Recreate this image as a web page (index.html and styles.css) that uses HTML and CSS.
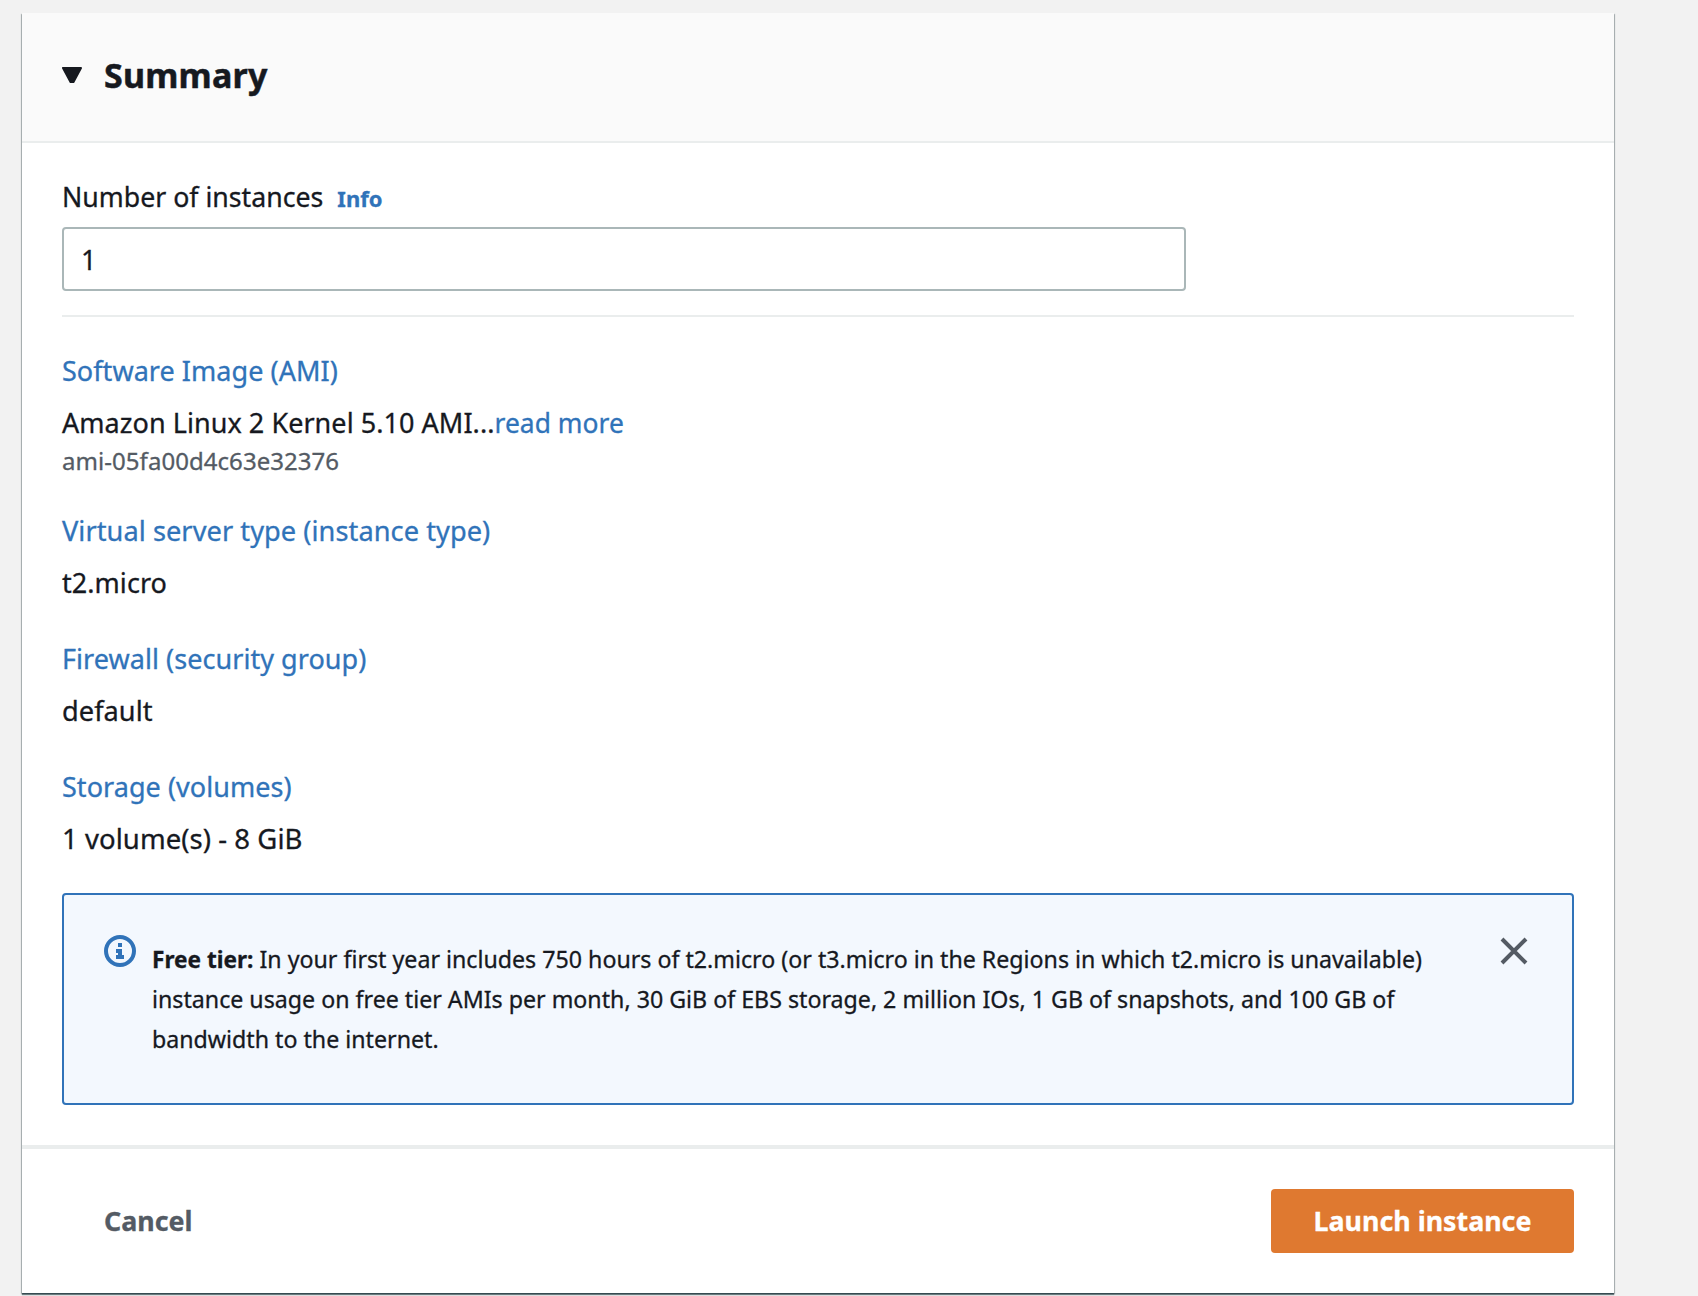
FILE: index.html
```html
<!doctype html>
<html lang="en">

<head>
    <meta charset="utf-8">
    <title>Launch an instance</title>
    <link rel="stylesheet" href="styles.css">
</head>

<body>
    <div class="panel">
        <div class="header">
            <svg class="caret" width="20" height="16" viewBox="0 0 20 16">
                <path d="M1 1h18l-7.5 14h-3z" fill="#16191f" stroke="#16191f" stroke-width="2" stroke-linejoin="round" />
            </svg>
            <h2>Summary</h2>
        </div>

        <div class="content">
            <div class="label">
                <label for="count">Number of instances</label>
                <a class="info">Info</a>
            </div>
            <input id="count" class="input" type="text" value="1">

            <dl class="details">
                <div>
                    <dt class="image">Software Image (AMI)</dt>
                    <dd class="ami"><span>Amazon Linux 2 Kernel 5.10 AMI...</span><a>read more</a></dd>
                    <dd class="small">ami-05fa00d4c63e32376</dd>
                </div>
                <div>
                    <dt class="server">Virtual server type (instance type)</dt>
                    <dd>t2.micro</dd>
                </div>
                <div>
                    <dt>Firewall (security group)</dt>
                    <dd class="group">default</dd>
                </div>
                <div>
                    <dt>Storage (volumes)</dt>
                    <dd class="volumes">1 volume(s) - 8 GiB</dd>
                </div>
            </dl>

            <div class="alert">
                <svg class="alert-icon" width="32" height="32" viewBox="0 0 32 32">
                    <circle cx="16" cy="16" r="14" fill="none" stroke="#3073b9" stroke-width="4" />
                    <path d="M14 8h4v4h-4zM12 14h6v6h2v4h-8v-4h2v-2h-2z" fill="#3073b9" />
                </svg>
                <p><b>Free tier:</b> In your first year includes 750 hours of t2.micro (or t3.micro in the Regions in which t2.micro is unavailable)<br>
                    instance usage on free tier AMIs per month, 30 GiB of EBS storage, 2 million IOs, 1 GB of snapshots, and 100 GB of<br>
                    bandwidth to the internet.</p>
                <svg class="close" width="28" height="28" viewBox="0 0 28 28">
                    <path d="M2 2l24 24M26 2L2 26" stroke="#545b64" stroke-width="4" />
                </svg>
            </div>
        </div>

        <div class="footer">
            <button class="cancel">Cancel</button>
            <button class="launch">Launch instance</button>
        </div>
    </div>
</body>

</html>
```
FILE: styles.css
```css
* {
    box-sizing: border-box;
}

body {
    margin: 0;
    min-height: 100vh;
    padding: 13px 84px 0 22px;
    background: #f2f2f2;
    color: #16191f;
    font: 27px/44px "Noto Sans", sans-serif;
    -webkit-text-stroke: .3px;
    overflow: hidden;
}

a,
dt {
    color: #3073b9;
}

.panel {
    background: #fff;
    box-shadow: 0 2px 1px 0 rgba(0, 28, 36, .5), 0 1px 1px 0 rgba(0, 28, 36, .3), 1px 1px 1px 0 rgba(0, 28, 36, .2), -1px 1px 1px 0 rgba(0, 28, 36, .2);
}

.header {
    display: flex;
    align-items: center;
    gap: 22px;
    height: 130px;
    padding: 0 40px 4px;
    background: #fafafa;
    border-bottom: 2px solid #eaeded;
}

h2 {
    margin: 0;
    font-size: 34px;
    letter-spacing: .2px;
    -webkit-text-stroke: .5px;
}

.content {
    padding: 32px 40px 40px;
}

.label {
    display: flex;
    align-items: baseline;
    gap: 14px;
    height: 44px;
    font-size: 26.7px;
}

.info {
    font-size: 22px;
    font-weight: bold;
}

.input {
    display: block;
    width: 1124px;
    height: 64px;
    margin-top: 8px;
    padding: 0 17px;
    border: 2px solid #aab7b8;
    border-radius: 4px;
    color: inherit;
    font: inherit;
}

.details {
    display: flex;
    flex-direction: column;
    gap: 32px;
    margin: 24px 0 32px;
    padding-top: 32px;
    border-top: 2px solid #eaeded;
    letter-spacing: .05px;
}

dd {
    margin: 0;
}

dt + dd {
    margin-top: 8px;
}

.ami a {
    font-size: 26.4px;
}

.server,
.group {
    font-size: 27.2px;
}

.volumes {
    font-size: 27.5px;
}

.small {
    color: #545b64;
    font-size: 24px;
    line-height: 32px;
}

.alert {
    display: flex;
    height: 212px;
    padding: 40px 44px 0 40px;
    background: #f3f8fe;
    border: 2px solid #3073b9;
    border-radius: 4px;
}

.alert p {
    flex: 1;
    margin: 4px 0 0 16px;
    font-size: 23.2px;
    line-height: 40px;
    white-space: nowrap;
}

.alert b {
    font-size: 22.6px;
    line-height: 1;
}

.close {
    margin-top: 2px;
}

.footer {
    display: flex;
    justify-content: space-between;
    padding: 40px;
    border-top: 4px solid #eaeded;
}

button {
    height: 64px;
    padding: 0 42px;
    border: 0;
    border-radius: 4px;
    background: none;
    color: #545b64;
    font: bold 26.8px/44px "Noto Sans", sans-serif;
}

.launch {
    width: 303px;
    background: #df7930;
    color: #fff;
}
```
